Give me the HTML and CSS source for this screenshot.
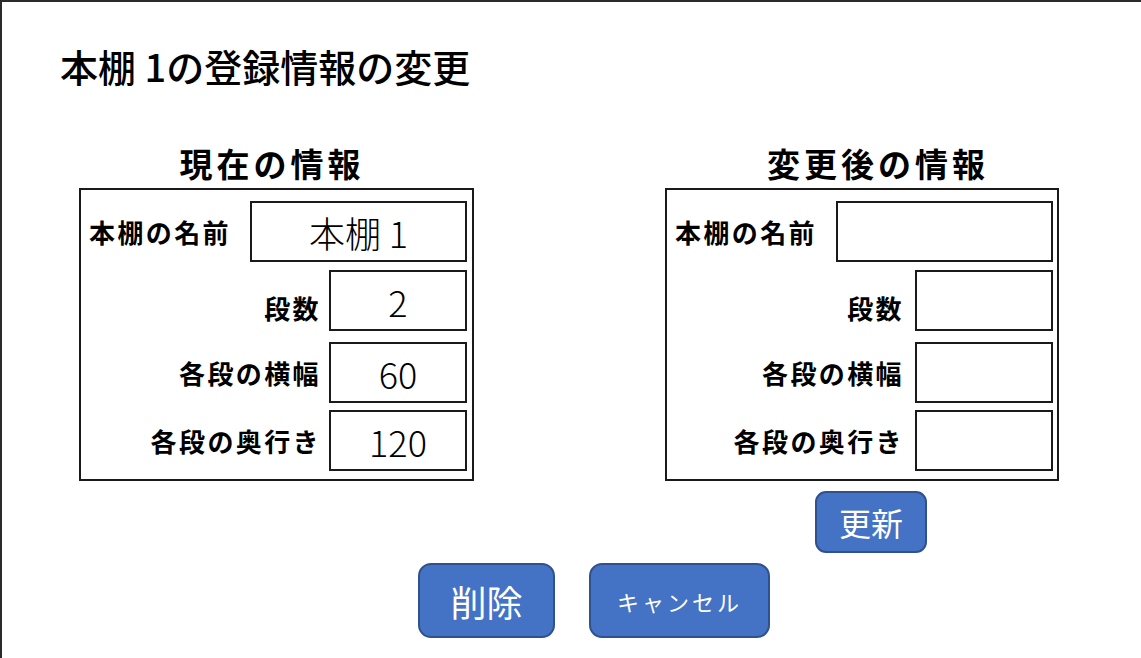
FILE: index.html
```html
<!DOCTYPE html>
<html lang="ja">
<head>
<meta charset="utf-8">
<title>本棚 1の登録情報の変更</title>
<link rel="stylesheet" href="styles.css">
</head>
<body>
<div class="frame">
  <h1 class="title">本棚 1の登録情報の変更</h1>
  <div class="columns">
    <section class="panel panel-current">
      <h2 class="panel-heading">現在の情報</h2>
      <div class="form-box">
        <div class="row row-name">
          <span class="label">本棚の名前</span>
          <div class="field field-wide">本棚 1</div>
        </div>
        <div class="row row-2">
          <span class="label label-low">段数</span>
          <div class="field">2</div>
        </div>
        <div class="row row-3">
          <span class="label">各段の横幅</span>
          <div class="field">60</div>
        </div>
        <div class="row row-4">
          <span class="label">各段の奥行き</span>
          <div class="field">120</div>
        </div>
      </div>
    </section>
    <section class="panel panel-new">
      <h2 class="panel-heading">変更後の情報</h2>
      <div class="form-box form-box-new">
        <div class="row row-name">
          <span class="label">本棚の名前</span>
          <div class="field field-wide"></div>
        </div>
        <div class="row row-2">
          <span class="label label-low">段数</span>
          <div class="field"></div>
        </div>
        <div class="row row-3">
          <span class="label">各段の横幅</span>
          <div class="field"></div>
        </div>
        <div class="row row-4">
          <span class="label">各段の奥行き</span>
          <div class="field"></div>
        </div>
      </div>
      <button class="btn btn-update">更新</button>
    </section>
  </div>
  <div class="actions">
    <button class="btn btn-delete">削除</button>
    <button class="btn btn-cancel">キャンセル</button>
  </div>
</div>
</body>
</html>
```
FILE: styles.css
```css
html, body {
  margin: 0;
  padding: 0;
  background: #ffffff;
}

body {
  font-family: "Noto Sans CJK JP", "Noto Sans", sans-serif;
  color: #000000;
  overflow: hidden;
}

.frame {
  box-sizing: border-box;
  width: 1141px;
  height: 658px;
  border-top: 2px solid #2b2b2b;
  border-left: 2px solid #2b2b2b;
  padding: 45px 0 0 0;
}

.title {
  margin: 0 0 0 58px;
  font-size: 38px;
  line-height: 38px;
  font-weight: 500;
  letter-spacing: 0;
}

.columns {
  display: flex;
  align-items: flex-start;
  gap: 191px;
  margin: 62px 0 0 77px;
}

.panel {
  display: flex;
  flex-direction: column;
  align-items: center;
}

.panel-heading {
  margin: 0 0 8px 0;
  font-size: 33px;
  line-height: 33px;
  font-weight: 700;
  letter-spacing: 4px;
}

.panel-current .panel-heading {
  padding-right: 9px;
}

.panel-new .panel-heading {
  padding-left: 32px;
}

.form-box {
  box-sizing: border-box;
  width: 395px;
  height: 293px;
  border: 2px solid #1a1a1a;
  padding: 11px 5px 0 8px;
  display: flex;
  flex-direction: column;
}

.form-box-new {
  width: 394px;
  padding-left: 8px;
  padding-right: 4px;
}

.row {
  display: flex;
  align-items: center;
  justify-content: flex-end;
  gap: 8px;
}

.form-box-new .row {
  gap: 11px;
}

.row-name {
  justify-content: space-between;
}

.row-2 { margin-top: 8px; }
.row-3 { margin-top: 11px; }
.row-4 { margin-top: 7px; }

.label {
  font-size: 26px;
  line-height: 30px;
  font-weight: 700;
  letter-spacing: 2.4px;
  white-space: nowrap;
}

.label-low {
  padding-top: 14px;
}

.field {
  box-sizing: border-box;
  width: 138px;
  height: 61px;
  border: 2px solid #1a1a1a;
  display: flex;
  align-items: center;
  justify-content: center;
  font-size: 36px;
  font-weight: 300;
  line-height: 1;
}

.field-wide {
  width: 217px;
}

.btn {
  box-sizing: border-box;
  background: #4472c4;
  border: 2px solid #2f528f;
  color: #ffffff;
  font-family: "Noto Sans CJK JP", "Noto Sans", sans-serif;
  font-weight: 400;
  padding: 0;
  display: flex;
  align-items: center;
  justify-content: center;
  line-height: 1;
}

.btn-update {
  align-self: flex-start;
  margin: 10px 0 0 150px;
  width: 112px;
  height: 62px;
  border-radius: 11px;
  font-size: 32px;
}

.actions {
  display: flex;
  gap: 34px;
  margin: 10px 0 0 416px;
}

.btn-delete {
  width: 137px;
  height: 75px;
  border-radius: 13px;
  font-size: 36px;
}

.btn-cancel {
  width: 181px;
  height: 75px;
  border-radius: 13px;
  font-size: 22px;
  letter-spacing: 3px;
}
```
